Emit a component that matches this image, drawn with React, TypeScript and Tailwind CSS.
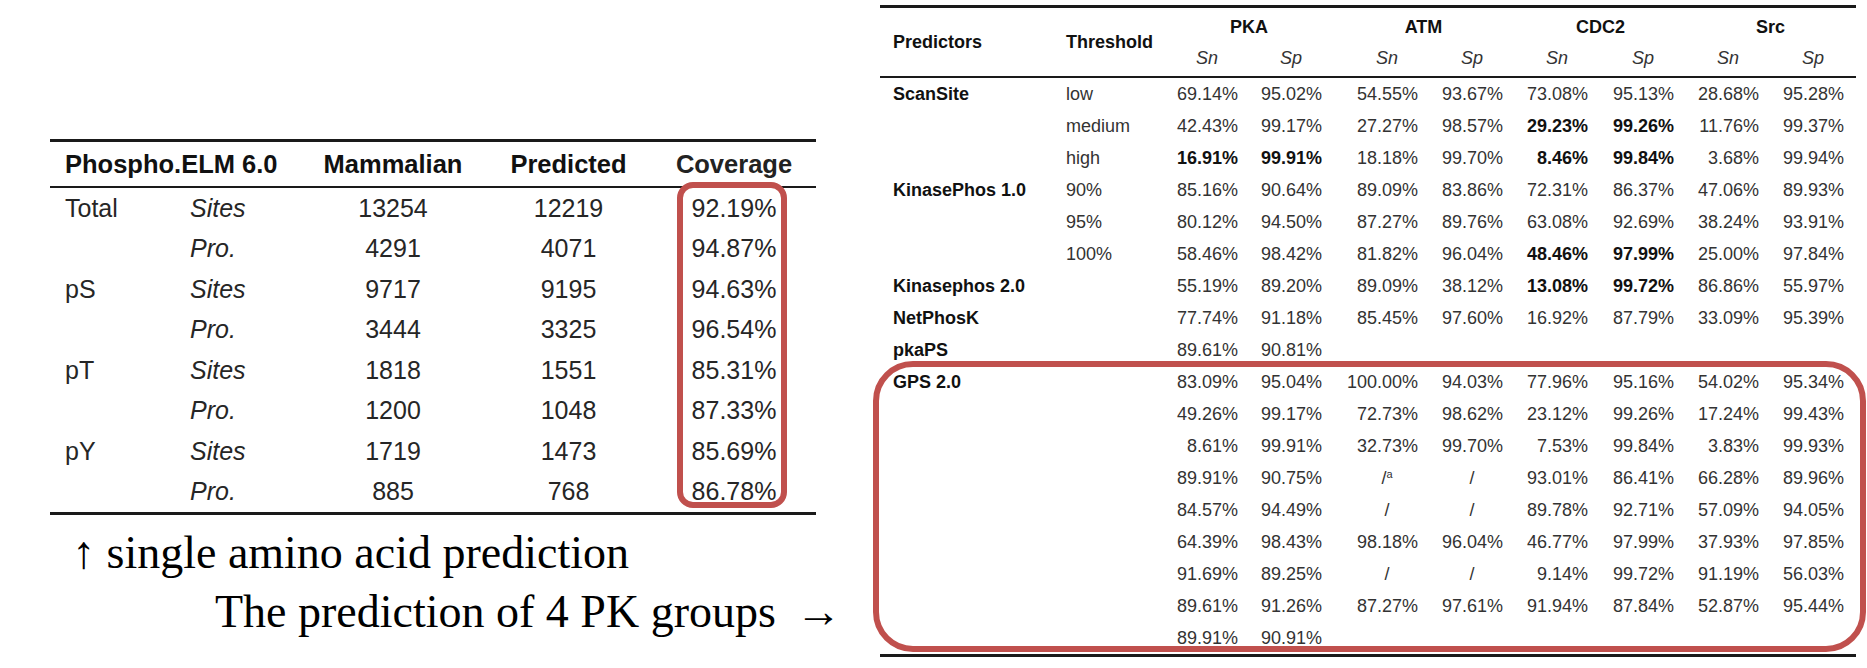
import React from 'react';

// left table: Phospho.ELM 6.0 coverage
const elmRows = [
  ['Total', 'Sites', '13254', '12219', '92.19%'],
  ['', 'Pro.', '4291', '4071', '94.87%'],
  ['pS', 'Sites', '9717', '9195', '94.63%'],
  ['', 'Pro.', '3444', '3325', '96.54%'],
  ['pT', 'Sites', '1818', '1551', '85.31%'],
  ['', 'Pro.', '1200', '1048', '87.33%'],
  ['pY', 'Sites', '1719', '1473', '85.69%'],
  ['', 'Pro.', '885', '768', '86.78%'],
];

// right table: predictor comparison, "*" marks a bold value
interface Row {
  predictor?: string;
  threshold?: string;
  values: string[];
}

const rows: Row[] = [
  { predictor: 'ScanSite', threshold: 'low', values: ['69.14%', '95.02%', '54.55%', '93.67%', '73.08%', '95.13%', '28.68%', '95.28%'] },
  { threshold: 'medium', values: ['42.43%', '99.17%', '27.27%', '98.57%', '*29.23%', '*99.26%', '11.76%', '99.37%'] },
  { threshold: 'high', values: ['*16.91%', '*99.91%', '18.18%', '99.70%', '*8.46%', '*99.84%', '3.68%', '99.94%'] },
  { predictor: 'KinasePhos 1.0', threshold: '90%', values: ['85.16%', '90.64%', '89.09%', '83.86%', '72.31%', '86.37%', '47.06%', '89.93%'] },
  { threshold: '95%', values: ['80.12%', '94.50%', '87.27%', '89.76%', '63.08%', '92.69%', '38.24%', '93.91%'] },
  { threshold: '100%', values: ['58.46%', '98.42%', '81.82%', '96.04%', '*48.46%', '*97.99%', '25.00%', '97.84%'] },
  { predictor: 'Kinasephos 2.0', values: ['55.19%', '89.20%', '89.09%', '38.12%', '*13.08%', '*99.72%', '86.86%', '55.97%'] },
  { predictor: 'NetPhosK', values: ['77.74%', '91.18%', '85.45%', '97.60%', '16.92%', '87.79%', '33.09%', '95.39%'] },
  { predictor: 'pkaPS', values: ['89.61%', '90.81%', '', '', '', '', '', ''] },
  { predictor: 'GPS 2.0', values: ['83.09%', '95.04%', '100.00%', '94.03%', '77.96%', '95.16%', '54.02%', '95.34%'] },
  { values: ['49.26%', '99.17%', '72.73%', '98.62%', '23.12%', '99.26%', '17.24%', '99.43%'] },
  { values: ['8.61%', '99.91%', '32.73%', '99.70%', '7.53%', '99.84%', '3.83%', '99.93%'] },
  { values: ['89.91%', '90.75%', '/a', '/', '93.01%', '86.41%', '66.28%', '89.96%'] },
  { values: ['84.57%', '94.49%', '/', '/', '89.78%', '92.71%', '57.09%', '94.05%'] },
  { values: ['64.39%', '98.43%', '98.18%', '96.04%', '46.77%', '97.99%', '37.93%', '97.85%'] },
  { values: ['91.69%', '89.25%', '/', '/', '9.14%', '99.72%', '91.19%', '56.03%'] },
  { values: ['89.61%', '91.26%', '87.27%', '97.61%', '91.94%', '87.84%', '52.87%', '95.44%'] },
  { values: ['89.91%', '90.91%', '', '', '', '', '', ''] },
];

const kinases = [
  { name: 'PKA', className: 'col-span-2 pl-[23px] text-center' },
  { name: 'ATM', className: 'col-span-2 pl-[22px] text-center' },
  { name: 'CDC2', className: 'col-span-2 pl-[24px] text-center' },
  { name: 'Src', className: 'col-span-2 pl-[23px] text-center' },
];

const gridCols = 'grid grid-cols-[186px_87px_85px_84px_96px_85px_85px_86px_85px_85px_12px]';

function Value({ v }: { v: string }) {
  if (!v) return <div />;
  const bold = v.startsWith('*');
  const text = bold ? v.slice(1) : v;
  if (text.startsWith('/')) {
    return (
      <div className="flex justify-end">
        <span className="w-[62px] text-center">
          /{text === '/a' && <sup className="text-[11px] leading-none">a</sup>}
        </span>
      </div>
    );
  }
  return <div className={bold ? 'text-right font-bold text-[#111]' : 'text-right'}>{text}</div>;
}

function CoverageTable() {
  return (
    <div className="relative w-[766px] font-['Liberation_Sans',Arial,sans-serif] text-[25px] text-[#262626]">
      <div className="h-[3px] bg-[#1a1a1a]" />
      <div className="grid grid-cols-[140px_133px_140px_211px_120px_22px] h-[44px] items-center text-[#111] text-[25.5px] font-bold">
        <div className="col-span-2 pl-[15px]">Phospho.ELM 6.0</div>
        <div className="text-center">Mammalian</div>
        <div className="text-center">Predicted</div>
        <div className="text-center text-[#222]">Coverage</div>
        <div />
      </div>
      <div className="h-[2px] bg-[#1a1a1a]" />
      {elmRows.map((r, i) => (
        <div key={i} className="grid grid-cols-[140px_133px_140px_211px_120px_22px] h-[40.5px] items-center">
          <div className="pl-[15px]">{r[0]}</div>
          <div className="italic">{r[1]}</div>
          <div className="text-center">{r[2]}</div>
          <div className="text-center">{r[3]}</div>
          <div className="text-center">{r[4]}</div>
          <div />
        </div>
      ))}
      <div className="h-[3px] bg-[#1a1a1a]" />
      <div className="absolute left-[627px] top-[43px] w-[110px] h-[326px] rounded-[16px] border-[6px] border-[#c0504d]" />
    </div>
  );
}

function PredictorTable() {
  return (
    <div className="relative w-[976px] font-['Liberation_Sans',Arial,sans-serif] text-[18px] text-[#333]">
      <div className="h-[3px] bg-[#1a1a1a]" />
      <div className={`${gridCols} grid-rows-[39px_29px]`}>
        <div className="row-span-2 self-center pl-[13px] font-bold text-[#111]">Predictors</div>
        <div className="row-span-2 self-center font-bold text-[#111]">Threshold</div>
        {kinases.map((k) => (
          <div key={k.name} className={`${k.className} self-center font-bold text-[#111]`}>
            {k.name}
          </div>
        ))}
        <div />
        {kinases.map((k) => (
          <React.Fragment key={k.name}>
            <div className="flex justify-end leading-[22px]">
              <span className="w-[62px] text-center italic">Sn</span>
            </div>
            <div className="flex justify-end leading-[22px]">
              <span className="w-[62px] text-center italic">Sp</span>
            </div>
          </React.Fragment>
        ))}
        <div />
      </div>
      <div className="h-[2px] bg-[#1a1a1a]" />
      {rows.map((r, i) => (
        <div key={i} className={`${gridCols} h-[32px] items-center`}>
          <div className="pl-[13px] font-bold text-[#111] whitespace-nowrap">{r.predictor}</div>
          <div>{r.threshold}</div>
          {r.values.map((v, j) => (
            <Value key={j} v={v} />
          ))}
          <div />
        </div>
      ))}
      <div className="h-[3px] bg-[#1a1a1a]" />
      <div className="absolute left-[-7px] top-[356px] w-[993px] h-[291px] rounded-[40px] border-[6px] border-[#c0504d]" />
    </div>
  );
}

export default function App() {
  return (
    <div className="flex w-[1867px] h-[668px] bg-white overflow-hidden">
      <div className="ml-[50px] w-[766px] pt-[139px] shrink-0">
        <CoverageTable />
        <div className="mt-[8px] font-['Liberation_Serif','Times_New_Roman',serif] text-[46px] leading-[59px] text-black whitespace-nowrap">
          <div className="pl-[22px]">↑ single amino acid prediction</div>
          <div className="pl-[165px]">
            The prediction of 4 PK groups<span className="ml-[20px]">→</span>
          </div>
        </div>
      </div>
      <div className="ml-[64px] w-[976px] pt-[5px] shrink-0">
        <PredictorTable />
      </div>
    </div>
  );
}
